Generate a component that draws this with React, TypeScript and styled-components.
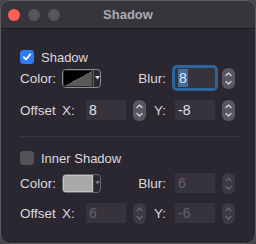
import React from "react";
import styled, { createGlobalStyle } from "styled-components";

const Global = createGlobalStyle`
  html, body { margin: 0; padding: 0; background: #46444a; }
  body { width: 256px; height: 244px; overflow: hidden; font-family: "Liberation Sans", Arial, sans-serif; }
`;

const Window = styled.div`
  box-sizing: border-box;
  width: 256px;
  height: 244px;
  border-radius: 10px;
  border: 1px solid #5d5a62;
  background: #2b2731;
  overflow: hidden;
  display: flex;
  flex-direction: column;
`;

const TitleBar = styled.div`
  height: 27px;
  flex: none;
  background: #37343b;
  border-bottom: 1px solid #1c1a1f;
  display: grid;
  grid-template-columns: 1fr auto 1fr;
  align-items: center;
  padding: 0 7px;
`;

const Lights = styled.div`
  display: flex;
  gap: 8px;
`;

const Light = styled.span<{ $c: string }>`
  width: 12px;
  height: 12px;
  border-radius: 50%;
  background: ${(p) => p.$c};
`;

const Title = styled.div`
  font-weight: bold;
  font-size: 13px;
  color: #aeaab2;
`;

const Body = styled.div`
  display: flex;
  flex-direction: column;
  padding-left: 19px;
`;

const Row = styled.div<{ $top: number }>`
  margin-top: ${(p) => p.$top}px;
  height: 22px;
  display: grid;
  grid-template-columns: 42px 24px 40px 7px 14px 28px 40px 7px 14px;
  align-items: center;
  font-size: 13.5px;
  color: #dcd9df;
`;

const CheckRow = styled.label<{ $top: number }>`
  margin-top: ${(p) => p.$top}px;
  height: 14px;
  display: flex;
  align-items: center;
  gap: 7px;
  font-size: 13px;
  color: #dcd9df;
`;

const Box = styled.span<{ $on?: boolean }>`
  width: 14px;
  height: 14px;
  border-radius: 3.5px;
  box-sizing: border-box;
  background: ${(p) => (p.$on ? "#2f7bf5" : "#55525a")};
  display: flex;
  align-items: center;
  justify-content: center;
`;

const Label = styled.span`
  white-space: nowrap;
`;

const RightLabel = styled.span<{ $col: string }>`
  grid-column: ${(p) => p.$col};
  text-align: right;
  padding-right: 9px;
  white-space: nowrap;
`;

const Field = styled.div<{ $col: number; $dim?: boolean; $focus?: boolean }>`
  grid-column: ${(p) => p.$col};
  box-sizing: border-box;
  height: 20px;
  background: #37333d;
  color: ${(p) => (p.$dim ? "#66626b" : "#e6e4e8")};
  padding-left: 3px;
  display: flex;
  align-items: center;
  font-size: 14px;
  box-shadow: ${(p) => (p.$focus ? "0 0 0 3px #2b659c" : "none")};
  border-radius: ${(p) => (p.$focus ? "2px" : "0")};
`;

const Sel = styled.span`
  background: #3f6fa3;
  padding: 1px 1px;
  line-height: 16px;
`;

const StepBtn = styled.div<{ $col: number; $dim?: boolean }>`
  grid-column: ${(p) => p.$col};
  width: 13px;
  height: 21px;
  border-radius: 6px;
  background: ${(p) => (p.$dim ? "#3d3943" : "#5b5762")};
  color: ${(p) => (p.$dim ? "#6b6770" : "#d6d3d9")};
  display: flex;
  align-items: center;
  justify-content: center;
`;

const Well = styled.div<{ $dim?: boolean }>`
  grid-column: 2 / 5;
  width: 39px;
  height: 19px;
  box-sizing: border-box;
  border: 1.5px solid ${(p) => (p.$dim ? "#6c6871" : "#8d8a92")};
  border-radius: 4px;
  display: flex;
  overflow: hidden;
`;

const Swatch = styled.div<{ $bg: string; $edge: string }>`
  width: 30px;
  height: 100%;
  box-sizing: border-box;
  border: 1px solid ${(p) => p.$edge};
  background: ${(p) => p.$bg};
`;

const Arrow = styled.div<{ $dim?: boolean }>`
  flex: 1;
  display: flex;
  align-items: center;
  justify-content: center;
  border-left: 1px solid ${(p) => (p.$dim ? "#4a4650" : "#5e5a64")};
  color: ${(p) => (p.$dim ? "#77737c" : "#e0dde3")};
`;

const Separator = styled.div`
  margin-top: 15px;
  margin-right: 14px;
  height: 1px;
  background: #3d3942;
`;

const Check = () => (
  <svg width="10" height="10" viewBox="0 0 10 10">
    <path d="M1.8 5.2 L4 7.5 L8.3 2.2" fill="none" stroke="#fff" strokeWidth="1.8" strokeLinecap="round" strokeLinejoin="round" />
  </svg>
);

const Chevrons = () => (
  <svg width="7" height="15" viewBox="0 0 7 15">
    <path d="M1 4.5 L3.5 2 L6 4.5 M1 10.5 L3.5 13 L6 10.5" fill="none" stroke="currentColor" strokeWidth="1.3" strokeLinecap="round" strokeLinejoin="round" />
  </svg>
);

const DownTri = () => (
  <svg width="5" height="4" viewBox="0 0 5 4">
    <path d="M0 0 L5 0 L2.5 3.5 Z" fill="currentColor" />
  </svg>
);

type SectionProps = {
  title: string;
  on: boolean;
  dim: boolean;
  blur: string;
  x: string;
  y: string;
  top: [number, number, number];
};

const Section = ({ title, on, dim, blur, x, y, top }: SectionProps) => (
  <>
    <CheckRow $top={top[0]}>
      <Box $on={on}>{on && <Check />}</Box>
      <Label>{title}</Label>
    </CheckRow>
    <Row $top={top[1]}>
      <Label>Color:</Label>
      <Well $dim={dim}>
        <Swatch
          $bg={dim ? "#a9a9a9" : "linear-gradient(to top left, #595959 50%, #000 50%)"}
          $edge={dim ? "#c4c4c4" : "#2a2a2a"}
        />
        <Arrow $dim={dim}>
          <DownTri />
        </Arrow>
      </Well>
      <RightLabel $col="5 / 7">Blur:</RightLabel>
      <Field $col={7} $dim={dim} $focus={!dim}>
        {dim ? blur : <Sel>{blur}</Sel>}
      </Field>
      <StepBtn $col={9} $dim={dim}>
        <Chevrons />
      </StepBtn>
    </Row>
    <Row $top={top[2]}>
      <Label>Offset</Label>
      <Label>X:</Label>
      <Field $col={3} $dim={dim}>{x}</Field>
      <StepBtn $col={5} $dim={dim}>
        <Chevrons />
      </StepBtn>
      <RightLabel $col="6">Y:</RightLabel>
      <Field $col={7} $dim={dim}>{y}</Field>
      <StepBtn $col={9} $dim={dim}>
        <Chevrons />
      </StepBtn>
    </Row>
  </>
);

export default function App() {
  return (
    <>
      <Global />
      <Window>
        <TitleBar>
          <Lights>
            <Light $c="#fe5f57" />
            <Light $c="#57545b" />
            <Light $c="#57545b" />
          </Lights>
          <Title>Shadow</Title>
          <span />
        </TitleBar>
        <Body>
          <Section title="Shadow" on dim={false} blur="8" x="8" y="-8" top={[21, 3, 10]} />
          <Separator />
          <Section title="Inner Shadow" on={false} dim blur="6" x="6" y="-6" top={[14, 7, 8]} />
        </Body>
      </Window>
    </>
  );
}
